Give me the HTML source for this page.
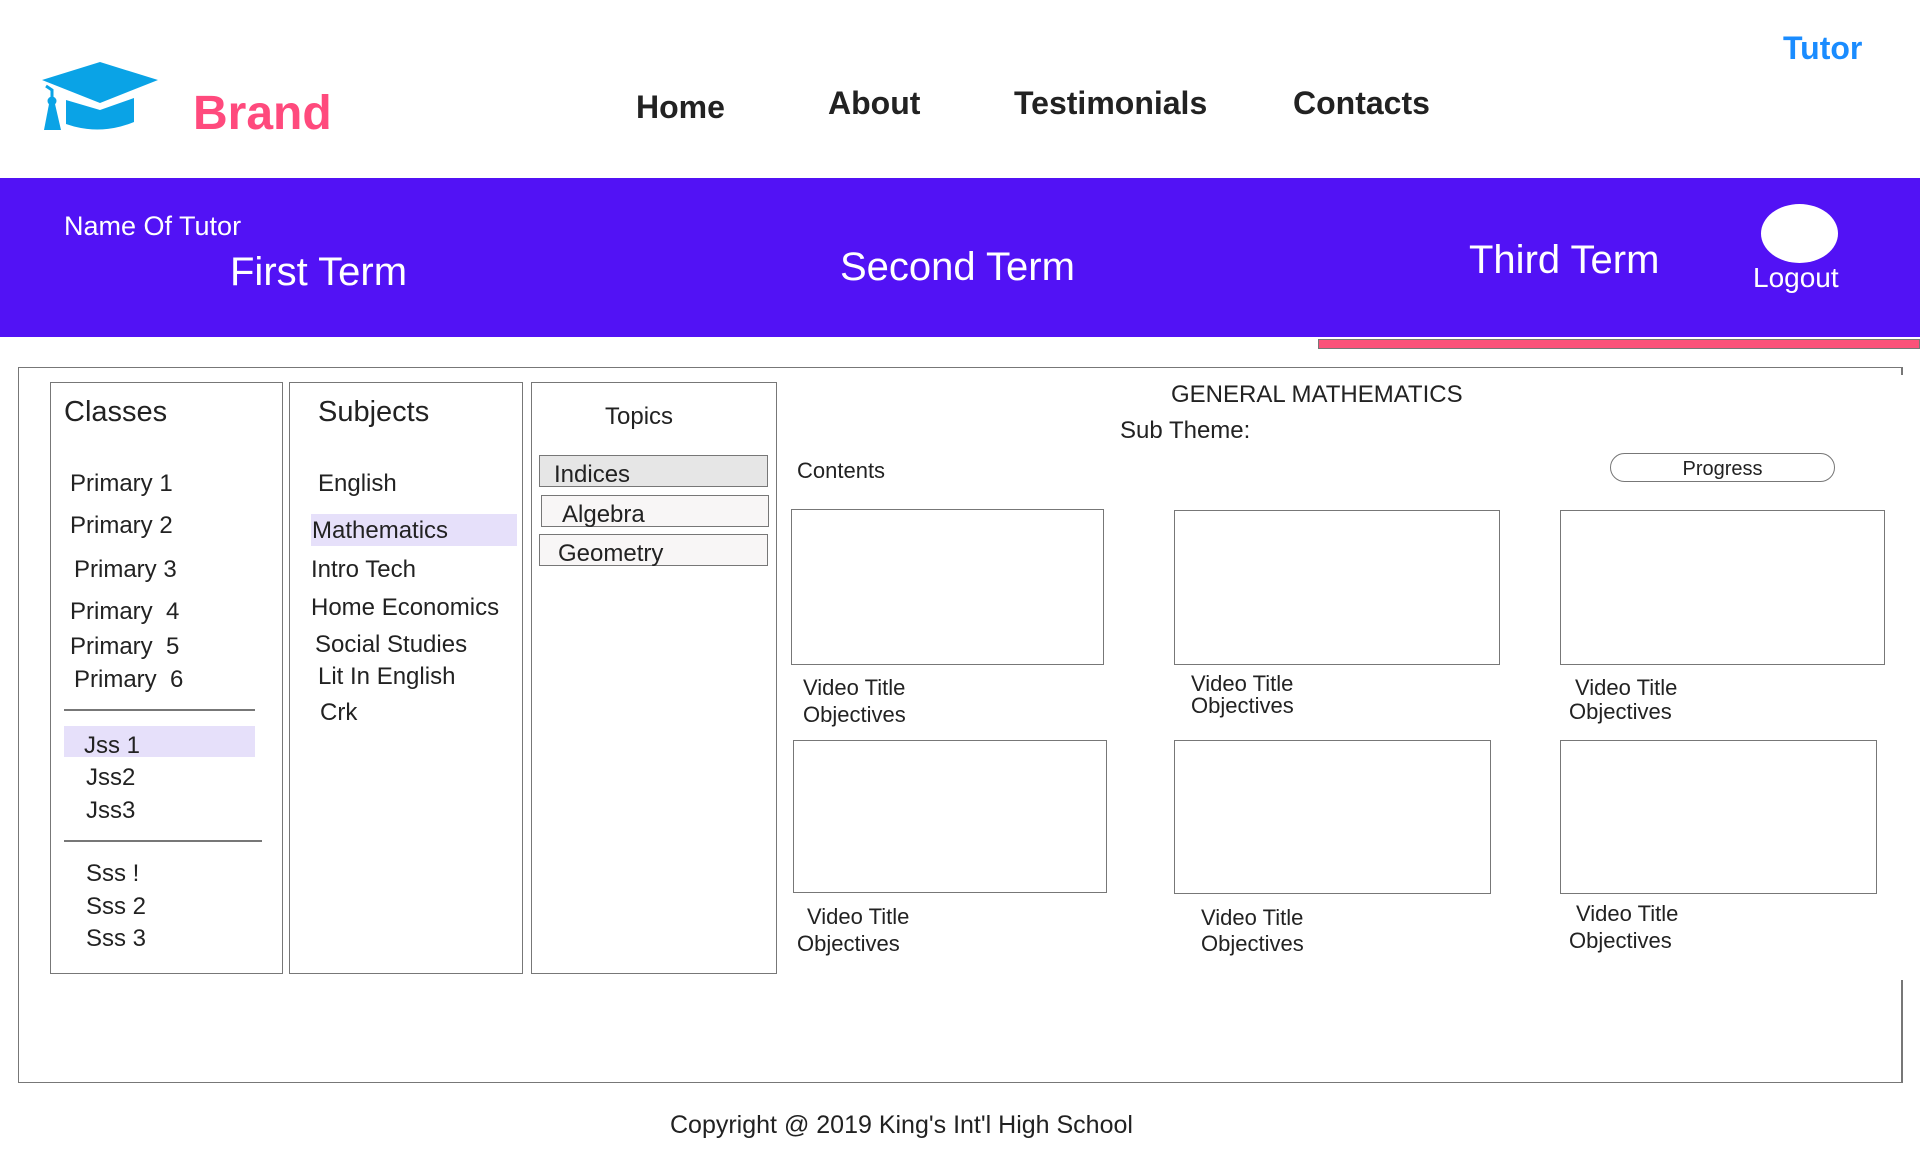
<!DOCTYPE html>
<html><head><meta charset="utf-8"><style>
*{margin:0;padding:0;box-sizing:border-box}
body{width:1920px;height:1174px;position:relative;background:#fff;font-family:"Liberation Sans",sans-serif;color:#222;overflow:hidden}
.t{position:absolute;white-space:nowrap;line-height:1;transform:translateY(2px)}
.b{position:absolute;border:1.5px solid #777;background:#fff}
.nav{font-weight:bold;font-size:32px;color:#222}
.w{color:#fff}
.s24{font-size:24px}
.s22{font-size:22px}
</style></head><body>
<svg style="position:absolute;left:0;top:0" width="170" height="160" viewBox="0 0 170 160">
<polygon points="42,80 100,62 158,80 100,103" fill="#0aa3e6"/>
<path d="M66,100 L100,110 L134,98 L134,122 Q100,136 66,124 Z" fill="#0aa3e6"/>
<path d="M46,86 L52,90 L52,98" stroke="#0aa3e6" stroke-width="3" fill="none"/>
<circle cx="52" cy="101" r="4.5" fill="#0aa3e6"/>
<polygon points="49,104 55,104 61,130 44,130" fill="#0aa3e6"/>
</svg>
<div class="t" style="left:193px;top:88px;font-size:48px;font-weight:bold;color:#ff4a7d">Brand</div>
<div class="t nav" style="left:636px;top:89px">Home</div>
<div class="t nav" style="left:828px;top:85px">About</div>
<div class="t nav" style="left:1014px;top:85px">Testimonials</div>
<div class="t nav" style="left:1293px;top:85px">Contacts</div>
<div class="t" style="left:1783px;top:30px;font-size:32px;font-weight:bold;color:#1a8cff">Tutor</div>

<div style="position:absolute;left:0;top:178px;width:1920px;height:159px;background:#5212f5"></div>
<div class="t w" style="left:64px;top:211px;font-size:27px">Name Of Tutor</div>
<div class="t w" style="left:230px;top:250px;font-size:40px">First Term</div>
<div class="t w" style="left:840px;top:245px;font-size:40px">Second Term</div>
<div class="t w" style="left:1469px;top:238px;font-size:40px">Third Term</div>
<div style="position:absolute;left:1761px;top:204px;width:77px;height:59px;border-radius:50%;background:#fff"></div>
<div class="t w" style="left:1753px;top:262px;font-size:28px">Logout</div>
<div style="position:absolute;left:1318px;top:339px;width:602px;height:10px;background:#fb5279;border:1px solid #777"></div>

<div style="position:absolute;left:18px;top:367px;width:1884px;height:716px;border-left:1.5px solid #777;border-top:1.5px solid #777;border-bottom:1.5px solid #777"></div>
<div style="position:absolute;left:1901px;top:367px;width:1.5px;height:8px;background:#777"></div>
<div style="position:absolute;left:1901px;top:980px;width:1.5px;height:103px;background:#777"></div>

<div class="b" style="left:50px;top:382px;width:233px;height:592px"></div>
<div class="b" style="left:289px;top:382px;width:234px;height:592px"></div>
<div class="b" style="left:531px;top:382px;width:246px;height:592px"></div>

<div class="t" style="left:64px;top:396px;font-size:29px">Classes</div>
<div class="t s24" style="left:70px;top:470px">Primary 1</div>
<div class="t s24" style="left:70px;top:512px">Primary 2</div>
<div class="t s24" style="left:74px;top:556px">Primary 3</div>
<div class="t s24" style="left:70px;top:598px">Primary &nbsp;4</div>
<div class="t s24" style="left:70px;top:633px">Primary &nbsp;5</div>
<div class="t s24" style="left:74px;top:666px">Primary &nbsp;6</div>
<div style="position:absolute;left:64px;top:709px;width:191px;height:2px;background:#777"></div>
<div style="position:absolute;left:64px;top:726px;width:191px;height:31px;background:#e6e0fa"></div>
<div class="t s24" style="left:84px;top:732px">Jss 1</div>
<div class="t s24" style="left:86px;top:764px">Jss2</div>
<div class="t s24" style="left:86px;top:797px">Jss3</div>
<div style="position:absolute;left:64px;top:840px;width:198px;height:2px;background:#777"></div>
<div class="t s24" style="left:86px;top:860px">Sss !</div>
<div class="t s24" style="left:86px;top:893px">Sss 2</div>
<div class="t s24" style="left:86px;top:925px">Sss 3</div>

<div class="t" style="left:318px;top:396px;font-size:29px">Subjects</div>
<div class="t s24" style="left:318px;top:470px">English</div>
<div style="position:absolute;left:311px;top:514px;width:206px;height:32px;background:#e6e0fa"></div>
<div class="t s24" style="left:312px;top:517px">Mathematics</div>
<div class="t s24" style="left:311px;top:556px">Intro Tech</div>
<div class="t s24" style="left:311px;top:594px">Home Economics</div>
<div class="t s24" style="left:315px;top:631px">Social Studies</div>
<div class="t s24" style="left:318px;top:663px">Lit In English</div>
<div class="t s24" style="left:320px;top:699px">Crk</div>

<div class="t s24" style="left:605px;top:403px">Topics</div>
<div class="b" style="left:539px;top:455px;width:229px;height:32px;background:#e6e6e6"></div>
<div class="t s24" style="left:554px;top:461px">Indices</div>
<div class="b" style="left:541px;top:495px;width:228px;height:32px;background:#f8f6f6"></div>
<div class="t s24" style="left:562px;top:501px">Algebra</div>
<div class="b" style="left:539px;top:534px;width:229px;height:32px;background:#f8f6f6"></div>
<div class="t s24" style="left:558px;top:540px">Geometry</div>

<div class="t s24" style="left:1171px;top:381px">GENERAL MATHEMATICS</div>
<div class="t s24" style="left:1120px;top:417px">Sub Theme:</div>
<div class="t s22" style="left:797px;top:458px">Contents</div>
<div style="position:absolute;left:1610px;top:453px;width:225px;height:29px;border:1.5px solid #777;border-radius:15px;font-size:20px;text-align:center;line-height:31px">Progress</div>

<div class="b" style="left:791px;top:509px;width:313px;height:156px"></div>
<div class="b" style="left:1174px;top:510px;width:326px;height:155px"></div>
<div class="b" style="left:1560px;top:510px;width:325px;height:155px"></div>
<div class="t s22" style="left:803px;top:675px">Video Title</div>
<div class="t s22" style="left:803px;top:702px">Objectives</div>
<div class="t s22" style="left:1191px;top:671px">Video Title</div>
<div class="t s22" style="left:1191px;top:693px">Objectives</div>
<div class="t s22" style="left:1575px;top:675px">Video Title</div>
<div class="t s22" style="left:1569px;top:699px">Objectives</div>

<div class="b" style="left:793px;top:740px;width:314px;height:153px"></div>
<div class="b" style="left:1174px;top:740px;width:317px;height:154px"></div>
<div class="b" style="left:1560px;top:740px;width:317px;height:154px"></div>
<div class="t s22" style="left:807px;top:904px">Video Title</div>
<div class="t s22" style="left:797px;top:931px">Objectives</div>
<div class="t s22" style="left:1201px;top:905px">Video Title</div>
<div class="t s22" style="left:1201px;top:931px">Objectives</div>
<div class="t s22" style="left:1576px;top:901px">Video Title</div>
<div class="t s22" style="left:1569px;top:928px">Objectives</div>

<div class="t" style="left:670px;top:1111px;font-size:25px">Copyright @ 2019 King's Int'l High School</div>
</body></html>
